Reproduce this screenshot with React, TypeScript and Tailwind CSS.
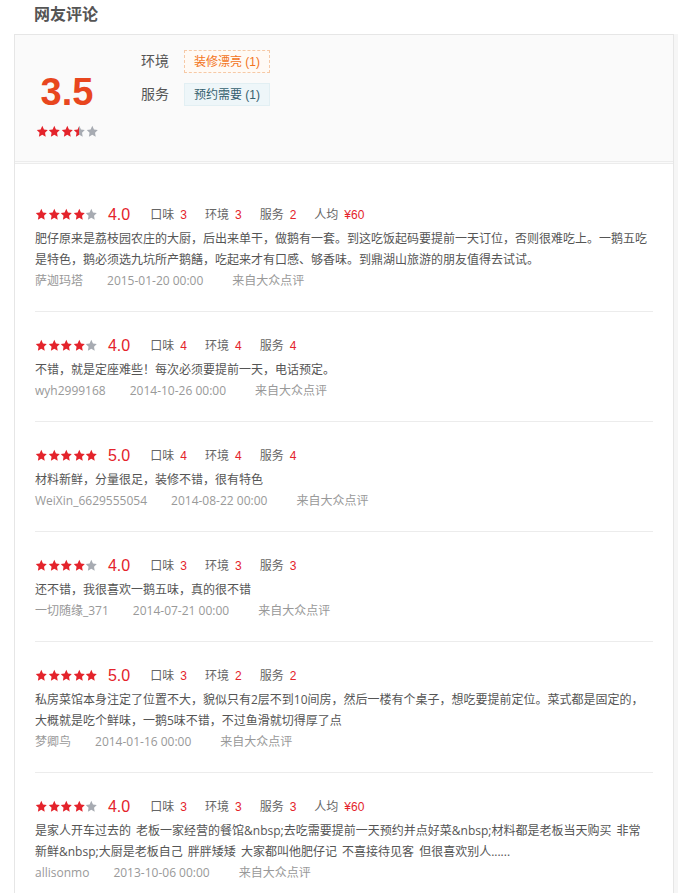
import React from "react";

const RED = "#e4232b";

type Review = {
  score: number;
  taste: number;
  env: number;
  service: number;
  price?: string;
  text: string;
  user: string;
  date: string;
};

const reviews: Review[] = [
  {
    score: 4,
    taste: 3,
    env: 3,
    service: 2,
    price: "¥60",
    text: "肥仔原来是荔枝园农庄的大厨，后出来单干，做鹅有一套。到这吃饭起码要提前一天订位，否则很难吃上。一鹅五吃是特色，鹅必须选九坑所产鹅饍，吃起来才有口感、够香味。到鼎湖山旅游的朋友值得去试试。",
    user: "萨迦玛塔",
    date: "2015-01-20 00:00",
  },
  {
    score: 4,
    taste: 4,
    env: 4,
    service: 4,
    text: "不错，就是定座难些！每次必须要提前一天，电话预定。",
    user: "wyh2999168",
    date: "2014-10-26 00:00",
  },
  {
    score: 5,
    taste: 4,
    env: 4,
    service: 4,
    text: "材料新鲜，分量很足，装修不错，很有特色",
    user: "WeiXin_6629555054",
    date: "2014-08-22 00:00",
  },
  {
    score: 4,
    taste: 3,
    env: 3,
    service: 3,
    text: "还不错，我很喜欢一鹅五味，真的很不错",
    user: "一切随缘_371",
    date: "2014-07-21 00:00",
  },
  {
    score: 5,
    taste: 3,
    env: 2,
    service: 2,
    text: "私房菜馆本身注定了位置不大，貌似只有2层不到10间房，然后一楼有个桌子，想吃要提前定位。菜式都是固定的，大概就是吃个鲜味，一鹅5味不错，不过鱼滑就切得厚了点",
    user: "梦卿鸟",
    date: "2014-01-16 00:00",
  },
  {
    score: 4,
    taste: 3,
    env: 3,
    service: 3,
    price: "¥60",
    text: "是家人开车过去的 老板一家经营的餐馆&nbsp;去吃需要提前一天预约并点好菜&nbsp;材料都是老板当天购买 非常新鲜&nbsp;大厨是老板自己 胖胖矮矮 大家都叫他肥仔记 不喜接待见客 但很喜欢别人......",
    user: "allisonmo",
    date: "2013-10-06 00:00",
  },
];

const STAR = "12,1.5 15.2,8.1 22.5,9.1 17.2,14.2 18.5,21.5 12,18 5.5,21.5 6.8,14.2 1.5,9.1 8.8,8.1";

const Star = ({ fill, id }: { fill: "full" | "half" | "empty"; id: string }) => (
  <svg width="12.6" height="13" viewBox="0 0 24 24" preserveAspectRatio="none" className="shrink-0">
    {fill === "half" && (
      <defs>
        <linearGradient id={id} x1="0" x2="1" y1="0" y2="0">
          <stop offset="50%" stopColor={RED} />
          <stop offset="50%" stopColor="#a7abb2" />
        </linearGradient>
      </defs>
    )}
    <polygon
      points={STAR}
      fill={fill === "full" ? RED : fill === "half" ? `url(#${id})` : "#a7abb2"}
    />
  </svg>
);

const Stars = ({ value, id }: { value: number; id: string }) => (
  <div className="flex items-center">
    {[0, 1, 2, 3, 4].map((i) => (
      <Star
        key={i}
        id={`${id}-${i}`}
        fill={value >= i + 1 ? "full" : value > i ? "half" : "empty"}
      />
    ))}
  </div>
);

const Item = ({ label, value }: { label: string; value: string | number }) => (
  <span className="mr-[18px] text-[12px] text-[#666]">
    {label}
    <span className="ml-[6px] text-[#e4232b]">{value}</span>
  </span>
);

const body = { fontFamily: '"Open Sans", "Noto Sans CJK SC", sans-serif' };

export default function App() {
  return (
    <div
      className="w-[688px] bg-white pb-4"
      style={{ fontFamily: '"Liberation Sans", "Noto Sans CJK SC", sans-serif' }}
    >
      <h2 className="h-[34px] pl-[34px] pt-[3px] text-[16px] font-bold leading-6 text-[#555]">网友评论</h2>
      <div className="ml-[14px] w-[660px] border border-[#e6e6e6] shadow-[4px_0_0_#f6f6f6]">
        <div className="flex h-[129px] border-b-[3px] border-double border-[#ececec] bg-[#fafafa] px-[20px] pt-[2px]">
          <div className="flex w-[64px] flex-col items-center pt-[35px]">
            <div className="text-[38px] font-bold leading-[40px] text-[#e8461e]">3.5</div>
            <div className="mt-[13px]">
              <Stars value={3.5} id="sum" />
            </div>
          </div>
          <div className="ml-[42px] flex flex-col gap-[10px] pt-[13px]">
            <div className="flex h-[23px] items-center">
              <span className="mr-[15px] text-[14px] text-[#555]">环境</span>
              <span className="flex h-[23px] items-center border border-dashed border-[#f6c9a6] bg-[#fffaf5] px-[9px] text-[12px] text-[#f27421]">
                装修漂亮 (1)
              </span>
            </div>
            <div className="flex h-[23px] items-center">
              <span className="mr-[15px] text-[14px] text-[#555]">服务</span>
              <span className="flex h-[23px] items-center border border-[#e2eff3] bg-[#eef6f9] px-[9px] text-[12px] text-[#35606e]">
                预约需要 (1)
              </span>
            </div>
          </div>
        </div>
        <div className="px-[20px] pt-[17px]">
          {reviews.map((r, idx) => (
            <div key={idx} className="border-b border-[#ececec] pb-[19px] pt-[22px] last:border-b-0">
              <div className="flex h-[23px] items-center">
                <Stars value={r.score} id={`r${idx}`} />
                <span className="ml-[10px] mr-[20px] text-[16px] text-[#e4232b]">{r.score.toFixed(1)}</span>
                <Item label="口味" value={r.taste} />
                <Item label="环境" value={r.env} />
                <Item label="服务" value={r.service} />
                {r.price && <Item label="人均" value={r.price} />}
              </div>
              <p
                className="mt-[2px] pr-[4px] text-[12px] leading-[21px] text-[#555] [word-spacing:2px]"
                style={body}
              >
                {r.text}
              </p>
              <div className="flex h-[22px] items-center text-[12px] text-[#999]" style={body}>
                <span className="mr-[24px]">{r.user}</span>
                <span className="mr-[29px]">{r.date}</span>
                <span>来自大众点评</span>
              </div>
            </div>
          ))}
        </div>
      </div>
    </div>
  );
}
